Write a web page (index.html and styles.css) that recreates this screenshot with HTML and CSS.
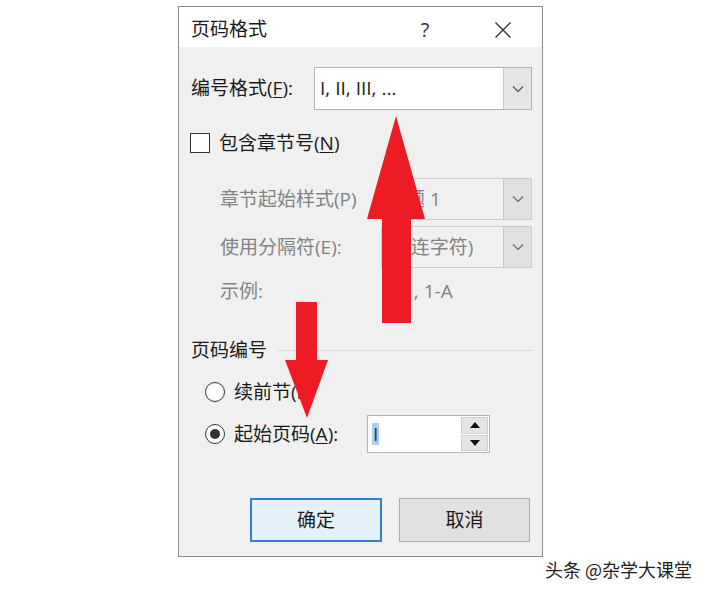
FILE: index.html
```html
<!DOCTYPE html>
<html lang="zh-CN">
<head>
<meta charset="utf-8">
<title>页码格式</title>
<link rel="stylesheet" href="styles.css">
</head>
<body>
<div class="page">
  <div class="dialog">
    <div class="titlebar">
      <span class="title">页码格式</span>
      <span class="help">?</span>
      <span class="close"><svg width="18" height="18" viewBox="0 0 18 18"><path d="M1.5 1.5 L16.5 16.5 M16.5 1.5 L1.5 16.5" stroke="#333" stroke-width="1.4" fill="none"/></svg></span>
    </div>
    <div class="body">
      <div class="row row-format">
        <span class="label">编号格式(<u>F</u>):</span>
        <div class="combo combo-main">
          <span class="combo-text latin">I, II, III, ...</span>
          <span class="drop"><svg width="12" height="8" viewBox="0 0 12 8"><path d="M1 1.5 L6 6.5 L11 1.5" stroke="#555" stroke-width="1.2" fill="none"/></svg></span>
        </div>
      </div>
      <div class="row row-check">
        <span class="checkbox"></span>
        <span class="check-label">包含章节号(<u>N</u>)</span>
      </div>
      <div class="row row-dis first-dis">
        <span class="dlabel">章节起始样式(P)</span>
        <div class="combo combo-dis">
          <span class="combo-text">标题 1</span>
          <span class="drop"><svg width="12" height="8" viewBox="0 0 12 8"><path d="M1 1.5 L6 6.5 L11 1.5" stroke="#666" stroke-width="1.2" fill="none"/></svg></span>
        </div>
      </div>
      <div class="row row-dis second-dis">
        <span class="dlabel">使用分隔符(E):</span>
        <div class="combo combo-dis">
          <span class="combo-text sep-text">- (连字符)</span>
          <span class="drop"><svg width="12" height="8" viewBox="0 0 12 8"><path d="M1 1.5 L6 6.5 L11 1.5" stroke="#666" stroke-width="1.2" fill="none"/></svg></span>
        </div>
      </div>
      <div class="row row-example">
        <span class="dlabel">示例:</span>
        <span class="example-value">1-1, 1-A</span>
      </div>
      <div class="row group-head">
        <span class="group-title">页码编号</span>
        <span class="group-line"></span>
      </div>
      <div class="row radio-row first-radio">
        <span class="radio"></span>
        <span class="radio-label">续前节(P)</span>
      </div>
      <div class="row radio-row second-radio">
        <span class="radio checked"></span>
        <span class="radio-label start-label">起始页码(<u>A</u>):</span>
        <div class="spin">
          <span class="spin-text latin"><span class="sel">I</span></span>
          <span class="spin-btns">
            <span class="spin-btn"><svg width="10" height="6" viewBox="0 0 10 6"><path d="M0 6 L5 0 L10 6 Z" fill="#111"/></svg></span>
            <span class="spin-btn"><svg width="10" height="6" viewBox="0 0 10 6"><path d="M0 0 L5 6 L10 0 Z" fill="#111"/></svg></span>
          </span>
        </div>
      </div>
      <div class="row buttons">
        <span class="btn btn-ok">确定</span>
        <span class="btn btn-cancel">取消</span>
      </div>
    </div>
  </div>

  <svg class="arrows" width="710" height="598" viewBox="0 0 710 598">
    <polygon points="396,116 425,219 411,219 411,323 382,323 382,219 367,219" fill="#ed1c24"/>
    <polygon points="296,302 317,302 317,360 328,360 307,418 285,360 296,360" fill="#ed1c24"/>
  </svg>

  <div class="watermark">头条 @杂学大课堂</div>
</div>
</body>
</html>
```

FILE: styles.css
```css
html, body {
  margin: 0;
  padding: 0;
  background: #ffffff;
}

.page {
  position: relative;
  width: 710px;
  height: 598px;
  overflow: hidden;
  padding-top: 6px;
  box-sizing: border-box;
  font-family: "Open Sans", "Noto Sans CJK SC", sans-serif;
  color: #1a1a1a;
  font-size: 19px;
  line-height: 1.2;
}

.latin {
  font-family: "Open Sans", "Noto Sans", sans-serif;
}

.dialog {
  margin-left: 178px;
  width: 365px;
  height: 551px;
  box-sizing: border-box;
  border: 1px solid #8c8c8c;
  display: flex;
  flex-direction: column;
}

.titlebar {
  height: 40px;
  box-sizing: border-box;
  padding-top: 5px;
  flex: none;
  background: #ffffff;
  display: flex;
  align-items: center;
  padding-left: 12px;
}

.title {
  flex: 1;
  font-size: 19px;
  color: #1a1a1a;
}

.help {
  width: 40px;
  text-align: center;
  font-size: 20px;
  color: #333;
  margin-right: 35px;
}

.close {
  width: 46px;
  display: flex;
  justify-content: center;
  align-items: center;
  margin-right: 16px;
}

.body {
  flex: 1;
  background: #f0f0f0;
  padding: 0 10px 0 12px;
  display: flex;
  flex-direction: column;
}

.row {
  display: flex;
  align-items: center;
  flex: none;
}

.row-format {
  margin-top: 20px;
  height: 43px;
}

.label {
  width: 123px;
  flex: none;
}

u {
  text-decoration: underline;
  text-underline-offset: 2px;
  text-decoration-thickness: 1px;
}

.combo {
  display: flex;
  align-items: stretch;
  box-sizing: border-box;
}

.combo-main {
  width: 218px;
  height: 43px;
  border: 1px solid #b4b4b4;
  background: #ffffff;
}

.combo-text {
  flex: 1;
  display: flex;
  align-items: center;
  padding-left: 5px;
  white-space: pre;
  overflow: hidden;
}

.combo-text.sep-text {
  padding-left: 12px;
}

.drop {
  width: 27px;
  flex: none;
  display: flex;
  align-items: center;
  justify-content: center;
  background: #e5e5e5;
  border-left: 1px solid #c8c8c8;
}

.row-check {
  margin-top: 18px;
  height: 30px;
}

.checkbox {
  width: 20px;
  height: 20px;
  box-sizing: border-box;
  border: 1px solid #333;
  background: #ffffff;
  margin-left: -1px;
  margin-right: 9px;
}

.row-dis {
  height: 42px;
  color: #838383;
}

.first-dis {
  margin-top: 20px;
}

.second-dis {
  margin-top: 6px;
}

.dlabel {
  width: 161px;
  padding-left: 29px;
  flex: none;
  color: #838383;
}

.combo-dis {
  width: 151px;
  height: 42px;
  border: 1px solid #cccccc;
  background: #f0f0f0;
  color: #838383;
}

.combo-dis .drop {
  background: #e0e0e0;
  border-left: 1px solid #c4c4c4;
}

.row-example {
  margin-top: 8px;
  height: 30px;
  color: #838383;
}

.example-value {
  padding-left: 5px;
}

.group-head {
  margin-top: 32px;
  height: 24px;
}

.group-title {
  flex: none;
  margin-right: 10px;
}

.group-line {
  flex: 1;
  height: 1px;
  background: #dcdcdc;
  margin-right: -1px;
}

.radio-row {
  padding-left: 14px;
}

.first-radio {
  margin-top: 15px;
  height: 30px;
}

.second-radio {
  margin-top: 8px;
  height: 38px;
}

.radio {
  width: 20px;
  height: 20px;
  box-sizing: border-box;
  border: 1px solid #333;
  border-radius: 50%;
  background: #ffffff;
  margin-right: 9px;
  display: flex;
  align-items: center;
  justify-content: center;
  flex: none;
}

.radio.checked::after {
  content: "";
  width: 10px;
  height: 10px;
  border-radius: 50%;
  background: #333;
}

.start-label {
  width: 133px;
  flex: none;
}

.spin {
  width: 123px;
  height: 38px;
  box-sizing: border-box;
  border: 1px solid #b4b4b4;
  background: #ffffff;
  display: flex;
}

.spin-text {
  flex: 1;
  display: flex;
  align-items: center;
  padding-left: 4px;
}

.sel {
  background: #a8cff3;
  color: #1d3b3b;
  padding: 0 1px;
  line-height: 22px;
}

.spin-btns {
  width: 27px;
  display: flex;
  flex-direction: column;
  padding: 1px;
  gap: 1px;
}

.spin-btn {
  flex: 1;
  background: #e5e5e5;
  border: 1px solid #cfcfcf;
  display: flex;
  align-items: center;
  justify-content: center;
}

.buttons {
  margin-top: 45px;
  height: 44px;
  justify-content: flex-end;
  gap: 17px;
  margin-right: 2px;
}

.btn {
  height: 44px;
  box-sizing: border-box;
  display: flex;
  align-items: center;
  justify-content: center;
  color: #1a1a1a;
}

.btn-ok {
  width: 132px;
  border: 2px solid #2d82d6;
  background: #e5f1fb;
}

.btn-cancel {
  width: 131px;
  border: 1px solid #adadad;
  background: #e1e1e1;
}

.arrows {
  position: absolute;
  left: 0;
  top: 0;
}

.watermark {
  position: absolute;
  left: 545px;
  top: 559px;
  font-size: 18px;
  color: #222;
  font-family: "Noto Sans CJK SC", sans-serif;
  text-shadow: 1px 1px 0 #fff, -1px -1px 0 #fff, 1px -1px 0 #fff, -1px 1px 0 #fff;
  white-space: nowrap;
}
```
